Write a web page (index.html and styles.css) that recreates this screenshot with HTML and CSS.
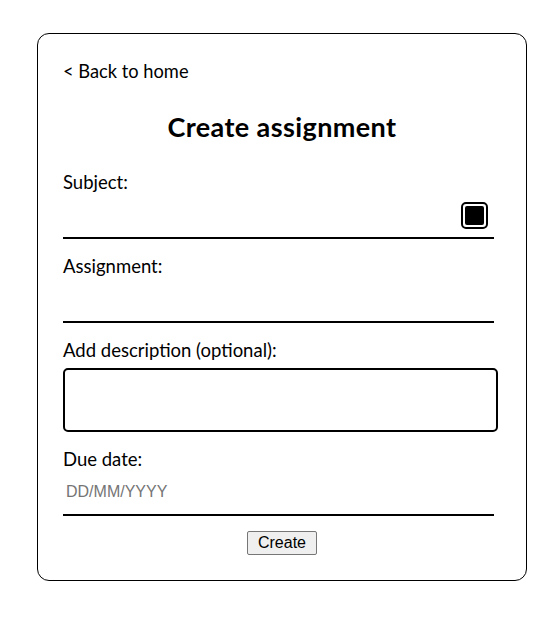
FILE: index.html
```html
<!DOCTYPE html>
<html>
<head>
<meta charset="utf-8">
<link rel="stylesheet" href="styles.css">
</head>
<body>
<div class="card">
  <a class="back" href="#">&lt; Back to home</a>
  <h1 class="title">Create assignment</h1>
  <label class="label lbl-subject">Subject:</label>
  <div class="field">
    <input class="line-input" type="text">
    <input class="color" type="color" value="#000000">
  </div>
  <label class="label">Assignment:</label>
  <input class="line-input" type="text">
  <label class="label">Add description (optional):</label>
  <textarea class="desc"></textarea>
  <label class="label">Due date:</label>
  <input class="line-input date" type="text" placeholder="DD/MM/YYYY">
  <div class="actions"><button class="btn">Create</button></div>
</div>
</body>
</html>
```
FILE: styles.css
```css
html, body { margin: 0; padding: 0; background: #fff; }
body { font-family: "Lato", "Open Sans", sans-serif; color: #000; }
.card {
  box-sizing: border-box;
  margin: 33px 0 0 37px;
  width: 490px;
  height: 548px;
  border: 1px solid #000;
  border-radius: 12px;
  padding: 26px 25px 25px 25px;
  display: flex;
  flex-direction: column;
}
.back {
  font-size: 18.3px;
  line-height: 22px;
  color: #000;
  text-decoration: none;
  align-self: flex-start;
}
.title {
  margin: 29px 0 0 0;
  font-size: 27px;
  line-height: 32px;
  font-weight: 700;
  letter-spacing: 0.4px;
  text-align: center;
}
.label {
  font-size: 18.5px;
  line-height: 22px;
  margin-top: 16px;
}
.lbl-subject { margin-top: 28px; }
.field { position: relative; width: 431px; }
.line-input {
  box-sizing: border-box;
  width: 431px;
  height: 46px;
  border: none;
  border-bottom: 2px solid #000;
  outline: none;
  padding: 0 3px;
  font-family: "Liberation Sans", Arial, sans-serif;
  font-size: 16px;
  background: transparent;
  display: block;
}
.date::placeholder { color: #757575; }
.color {
  position: absolute;
  right: 6px;
  top: 9px;
  -webkit-appearance: none;
  appearance: none;
  box-sizing: border-box;
  width: 27px;
  height: 27px;
  border: 2px solid #000;
  border-radius: 5px;
  padding: 2px;
  background: #fff;
  cursor: pointer;
}
.color::-webkit-color-swatch-wrapper { padding: 0; }
.color::-webkit-color-swatch { border: none; border-radius: 2px; }
.desc {
  box-sizing: border-box;
  margin-top: 7px;
  width: 435px;
  height: 65px;
  border: 2px solid #000;
  border-radius: 5px;
  resize: none;
  outline: none;
  display: block;
}
.actions { display: flex; justify-content: center; margin-top: 15px; width: 438px; }
.btn {
  font-family: "Liberation Sans", Arial, sans-serif;
  font-size: 16px;
  height: 24px;
  padding: 0 10px;
  background: #efefef;
  border: 1px solid #767676;
  border-radius: 2px;
  color: #000;
}
```
